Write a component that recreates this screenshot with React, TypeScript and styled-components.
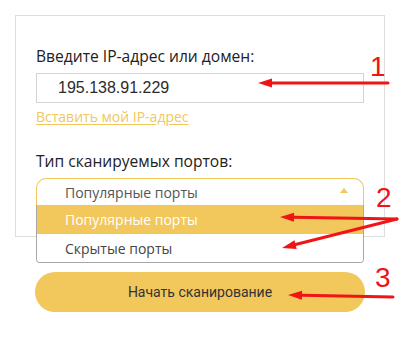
import { createGlobalStyle } from 'styled-components';
import styled from 'styled-components';

const GlobalStyle = createGlobalStyle`
  html, body {
    margin: 0;
    padding: 0;
    background: #ffffff;
  }
  body {
    font-family: "Open Sans", "Noto Sans", sans-serif;
  }
`;

const YELLOW = '#f2c75c';

const Page = styled.div`
  position: relative;
  width: 410px;
  height: 337px;
  box-sizing: border-box;
  padding: 15px 0 0 15px;
  overflow: hidden;
`;

const Card = styled.div`
  width: 370px;
  box-sizing: border-box;
  border: 1px solid #dedede;
  padding: 30px 20px 31px 20px;
  display: flex;
  flex-direction: column;
`;

const Label = styled.div<{ $gap?: number }>`
  font-size: 15.6px;
  line-height: 20px;
  color: #222;
  margin-top: ${(p) => p.$gap ?? 0}px;
`;

const IpInput = styled.div`
  margin-top: 7px;
  height: 30px;
  box-sizing: border-box;
  border: 1px solid #d4d4d4;
  padding-left: 21px;
  display: flex;
  align-items: center;
  font-family: "Liberation Sans", Arial, sans-serif;
  font-size: 16px;
  color: #2b2b2b;
`;

const PasteLink = styled.a`
  margin-top: 4px;
  align-self: flex-start;
  font-size: 14px;
  line-height: 20px;
  color: ${YELLOW};
  text-decoration: underline;
  text-underline-offset: 2px;
`;

const Select = styled.div`
  position: relative;
  margin-top: 7px;
`;

const SelectHead = styled.div`
  height: 27px;
  box-sizing: border-box;
  border: 1px solid ${YELLOW};
  border-bottom: none;
  border-radius: 10px 10px 0 0;
  display: flex;
  align-items: center;
  justify-content: space-between;
  padding: 0 15px 0 28px;
  font-size: 14px;
  color: #555;
`;

const Caret = styled.span`
  width: 0;
  height: 0;
  border-left: 4px solid transparent;
  border-right: 4px solid transparent;
  border-bottom: 5px solid ${YELLOW};
  margin-top: -3px;
`;

const Menu = styled.div`
  position: absolute;
  top: 27px;
  left: 0;
  right: 0;
  background: #fff;
  border: 1px solid #a8a8a8;
  border-top: none;
  border-radius: 0 0 4px 4px;
  box-shadow: inset 1px 0 0 ${YELLOW};
  overflow: hidden;
  z-index: 2;
`;

const Option = styled.div<{ $active?: boolean; $h: number }>`
  height: ${(p) => p.$h}px;
  display: flex;
  align-items: center;
  padding-left: 28px;
  font-size: 14px;
  background: ${(p) => (p.$active ? YELLOW : '#fff')};
  color: ${(p) => (p.$active ? '#fff' : '#444')};
`;

const ScanButton = styled.button`
  margin: 35px 0 0 20px;
  width: 330px;
  height: 40px;
  border: none;
  border-radius: 20px;
  background: ${YELLOW};
  font-family: Roboto, "Liberation Sans", sans-serif;
  font-size: 14px;
  color: #333;
  display: flex;
  align-items: center;
  justify-content: center;
  padding: 0;
`;

const Marks = styled.svg`
  position: absolute;
  left: 0;
  top: 0;
  width: 410px;
  height: 337px;
  pointer-events: none;
  z-index: 5;
`;

const Num = styled.text`
  font-family: "Liberation Sans", Arial, sans-serif;
  font-size: 28px;
  fill: #f01414;
`;

function Arrow({ x1, y1, x2, y2 }: { x1: number; y1: number; x2: number; y2: number }) {
  const a = Math.atan2(y1 - y2, x1 - x2);
  const len = 14;
  const w = 4.5;
  const bx = x2 + Math.cos(a) * len;
  const by = y2 + Math.sin(a) * len;
  const px = -Math.sin(a) * w;
  const py = Math.cos(a) * w;
  return (
    <g>
      <line x1={x1} y1={y1} x2={bx} y2={by} stroke="#f01414" strokeWidth={3} strokeLinecap="round" />
      <polygon
        points={`${x2},${y2} ${bx + px},${by + py} ${bx - px},${by - py}`}
        fill="#f01414"
      />
    </g>
  );
}

export default function App() {
  return (
    <>
      <GlobalStyle />
      <Page>
        <Card>
          <Label>Введите IP-адрес или домен:</Label>
          <IpInput>195.138.91.229</IpInput>
          <PasteLink>Вставить мой IP-адрес</PasteLink>
          <Label $gap={24}>Тип сканируемых портов:</Label>
          <Select>
            <SelectHead>
              <span>Популярные порты</span>
              <Caret />
            </SelectHead>
            <Menu>
              <Option $active $h={29}>Популярные порты</Option>
              <Option $h={28}>Скрытые порты</Option>
            </Menu>
          </Select>
        </Card>
        <ScanButton>Начать сканирование</ScanButton>
        <Marks viewBox="0 0 410 337">
          <Num x={370} y={76}>1</Num>
          <Arrow x1={388} y1={83} x2={258} y2={83} />
          <Num x={376} y={207}>2</Num>
          <Arrow x1={397} y1={219} x2={280} y2={217} />
          <Arrow x1={397} y1={219} x2={282} y2={248} />
          <Num x={375} y={287}>3</Num>
          <Arrow x1={393} y1={297} x2={288} y2={295} />
        </Marks>
      </Page>
    </>
  );
}
